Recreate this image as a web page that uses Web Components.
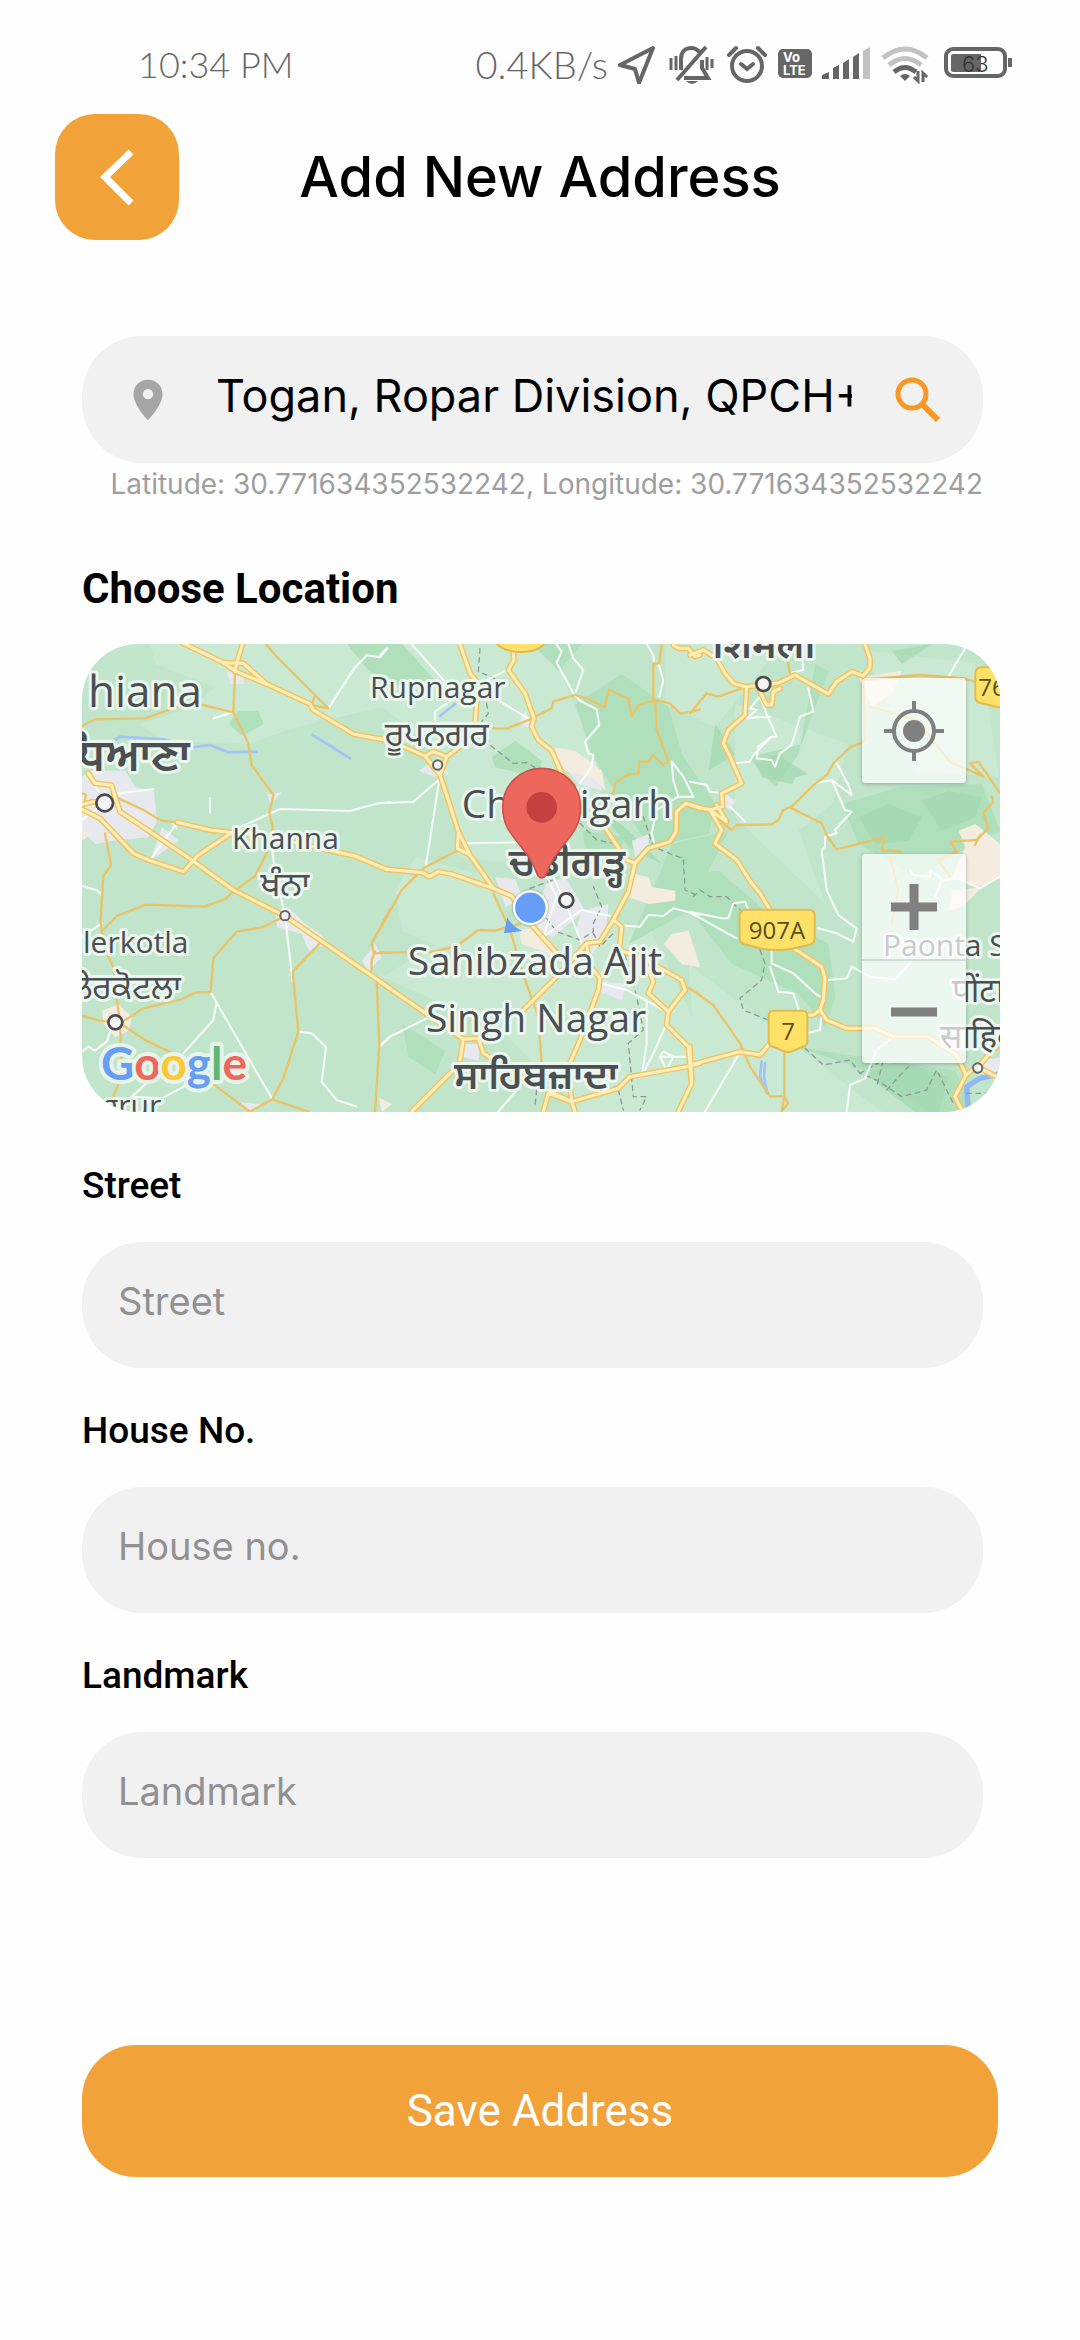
<!DOCTYPE html>
<html lang="en">
<head>
<meta charset="utf-8">
<meta name="viewport" content="width=device-width, initial-scale=1">
<title>Add New Address</title>
<style>
  body { margin: 0; background: #fefefe; color: #000; font-family: Inter, "Open Sans", sans-serif; }
</style>
</head>
<body>
<address-page></address-page>
<script>
const define = (name, html) => {
  const tpl = document.createElement('template');
  tpl.innerHTML = html;
  customElements.define(name, class extends HTMLElement {
    constructor() {
      super();
      this.attachShadow({ mode: 'open' }).append(tpl.content.cloneNode(true));
    }
  });
};

/* ---------- status bar ---------- */
define('status-bar', `
<style>
  :host { display: flex; align-items: center; justify-content: space-between; box-sizing: border-box;
    height: 114px; padding: 14px 68px 0 138px; color: #666; font: 300 36px/44px Lato, sans-serif; }
  .right { display: flex; align-items: center; gap: 10px; }
  .speed { font-size: 38px; }
  svg { display: block; height: 40px; fill: none; stroke: #666; }
  svg text { fill: #fff; stroke: none; font-family: Inter, sans-serif; }
</style>
<span>10:34 PM</span>
<div class="right">
  <span class="speed">0.4KB/s</span>
  <svg width="40" viewBox="0 0 40 40" stroke-width="4" stroke-linejoin="round"><path d="M35 4 2 21l15 4 4 14Z"/></svg>
  <svg width="48" viewBox="0 0 48 40" stroke-width="4"><path d="M9 36 38 3M13 26V15c0-7 4-11 10-11 4 0 7 2 9 5M34 16v8l6 10H16"/><path d="M3 14v12M8 12v14M39 13v13M44 15v9" stroke-width="3"/><path d="M18 37h12q-6 6-12 0Z" fill="#666" stroke="none"/></svg>
  <svg width="42" viewBox="0 0 42 40" stroke-width="4" stroke-linecap="round"><circle cx="21" cy="22" r="15"/><path d="m15 20 6 5 6-5M3 11l7-7M39 11l-7-7"/></svg>
  <svg width="34" viewBox="0 0 34 40"><rect y="5" width="34" height="29" rx="5" fill="#666" stroke="none"/><text x="5" y="18" font-size="13" font-weight="700">Vo</text><text x="5" y="31" font-size="13" font-weight="700">LTE</text></svg>
  <svg width="48" viewBox="0 0 48 40"><g fill="#666" stroke="none"><path d="M0 35v-4l7-3v7zM11 35V24l6-3v14zM21 35V19l6-4v20zM31 35V13l6-4v26z"/><path d="M41 35V7l7-4v32z" fill="#c2c2c2"/></g></svg>
  <svg width="50" viewBox="0 0 50 40" stroke-width="5"><path d="M3 14Q25-4 47 14M9 21q16-13 32 0" stroke="#c2c2c2"/><path d="M14 28q11-9 22 0"/><path d="M20 32q5-4 10 0l-5 5Z" fill="#666" stroke="none"/><path d="M38 27v10l-4-4M43 38V29l4 4" stroke-width="3"/></svg>
  <svg width="72" viewBox="0 0 72 40"><rect x="6" y="5" width="59" height="27" rx="7" stroke-width="4"/><path d="M11 12q0-2 2-2h28v18H13q-2 0-2-2Z" fill="#666" stroke="none"/><path d="M70 14v9" stroke-width="4"/><text x="22" y="28" font-size="22" font-weight="300" style="fill:#333">63</text></svg>
</div>`);

/* ---------- header ---------- */
define('page-header', `
<style>
  :host { display: grid; grid-template-columns: 124px 1fr 124px; align-items: center; padding: 0 55px; }
  button { height: 126px; border: 0; border-radius: 40px; background: #f1a239; padding: 0; display: grid; place-items: center; }
  h1 { margin: 0; text-align: center; font: 500 56px/80px Inter, sans-serif; }
</style>
<button aria-label="Back"><svg width="60" height="60" viewBox="0 0 60 60" fill="none" stroke="#fff" stroke-width="7"><path d="M44 5 18 30l26 26"/></svg></button>
<h1><slot></slot></h1>`);

/* ---------- search ---------- */
define('location-search', `
<style>
  :host { display: block; margin-right: 17px; }
  .box { display: flex; align-items: center; box-sizing: border-box; height: 127px; border-radius: 60px;
    background: #f1f1f1; padding: 0 36px 0 40px; }
  input { flex: 1; min-width: 0; margin: 0 37px 0 42px; padding: 0 0 8px; border: 0; outline: 0; background: none;
    color: #000; font: 400 45px/60px Inter, sans-serif; }
  button { border: 0; padding: 0; background: none; display: block; }
  svg { display: block; }
  p { margin: 0; text-align: right; color: #9e9e9e; font: 400 28px/42px Inter, sans-serif; white-space: nowrap; }
</style>
<div class="box">
  <svg width="52" height="52" viewBox="0 0 24 24" fill="#a6a6a6"><path d="M12 2.700C8.200 2.700 5.300 5.600 5.300 9.300 5.300 14.400 12 21.300 12 21.300s6.700-6.900 6.700-12c0-3.700-2.900-6.600-6.700-6.600Zm0 9a2.400 2.400 0 1 1 0-4.800 2.400 2.400 0 0 1 0 4.800Z"/></svg>
  <input aria-label="Search location" value="Togan, Ropar Division, QPCH+">
  <button aria-label="Search"><svg width="58" height="58" viewBox="0 0 58 58" fill="none" stroke="#f79824" stroke-width="5"><circle cx="23" cy="23" r="14"/><path d="m34 34 15 15" stroke-width="6"/></svg></button>
</div>
<p><slot></slot></p>`);

/* ---------- map ---------- */
/* Road geometry is stored per tile column; each tile has its own horizontal origin. */
const tiles = [
  { dx: -36,
    major: ['340,40 460,98 500,125 590,162 720,222 730,240 850,312 960,333','460,98 520,100 590,162','518,40 500,100 495,125','55,430 75,460 125,466 135,500 150,545 225,595 365,690 490,780 645,858 960,1075','30,535 90,565 190,670 240,692 340,725 385,675 480,612','30,525 70,515 104,519','322,577 420,600 600,622 855,678 950,718'],
    minor: ['36,288 75,268 225,265 330,228 400,225 490,247','495,130 490,247 535,340 545,405 610,495 598,550 608,590 600,650 555,738 490,785 465,808 402,830 228,824 140,858 95,905','588,42 620,80 735,195 775,235 725,225 735,195','105,610 123,705 100,738 92,870 95,905 110,970 130,1010 140,1100 150,1180 155,1340 125,1410','150,1180 220,1135 335,1108 375,1088 422,1086 430,985 500,905 578,892 645,858','36,1158 90,1172 150,1180 225,1230 340,1285 440,1370 540,1445','135,500 220,540 275,572 322,577','752,938 668,1025 685,1205 640,1345 607,1408 540,1445','607,1408 715,1445','960,838 905,940 912,970 960,968','905,1020 905,990 915,965','920,1050 928,1245 915,1445','36,490 48,495 40,530'],
    white: ['430,265 490,247','775,235 855,112 890,76 930,82 952,55','420,505 420,548','480,605 630,537 840,543 925,520 960,517','135,492 250,478','322,577 240,690','605,650 615,720 645,858 668,1055','36,768 80,780 95,795','36,920 95,880','422,1086 440,1118 607,1408','440,1118 430,1170 340,1270','185,1400 275,1405 370,1355','185,1400 240,1350','685,1205 725,1210 768,1252 755,1355 800,1410 860,1430','36,1265 55,1250 75,1262 110,1235 130,1180','928,1248 960,1220','55,430 104,519 36,570'],
    dash: [],
    river: ['120,342 150,320 280,328 370,352 420,345 475,367 560,365','728,315 840,385'] },
  { dx: 894,
    major: ['20,718 130,728 148,740 175,725 215,732 340,775 395,798 460,890 540,980','240,42 270,130 295,160 285,280 280,320 200,380 180,435','400,68 402,90 385,120 435,190 462,265 455,290 475,330 515,362 545,430 600,490 680,600 740,690 765,700','0,325 60,345 135,378 180,435 205,510 235,605 232,655 270,675 340,775','135,378 160,365 200,380','235,605 270,675','960,535 918,520 890,545 888,605 870,635 805,655 765,700 745,785 700,870 660,935 620,940 540,1030 430,1140','295,1225 250,1228 0,1055','250,1228 240,1290','215,1325 95,1445','295,1225 310,1270 440,1350 575,1415','620,940 628,1005 660,1045 655,1080 600,1230 565,1310 575,1415 585,1445','505,1390 490,1445','700,870 725,890 718,960 790,985 905,1050 915,1080 865,1145 860,1185 925,1250 935,1360 895,1445','790,985 820,1055 805,1090 865,1145','505,1390 575,1415 715,1375 750,1340 920,1310 960,1300','880,45 895,55 925,55 945,80 960,75'],
    minor: ['330,295 380,296 450,268 515,235 520,215 550,205 585,195 620,205 675,232 685,180 745,205 755,260 775,225 825,210 870,220 900,250 940,245 960,238','825,210 830,300 865,395 850,405 820,375 805,395 778,395 775,430 740,435 705,460 700,490 670,500','845,45 838,100 820,100 820,210','235,660 130,715 65,780 0,898','0,968 155,966 230,948 295,900 345,902 420,882','340,790 390,900 430,1035 475,1160 485,1300','905,1090 925,1075 960,1095'],
    white: ['0,75 20,55','95,42 195,155','300,160 385,118','360,215 450,268','165,280 165,245 230,200','528,42 545,65 530,98 580,190 600,212 650,238 658,285 615,335 625,370 640,375 635,410 600,460','565,42 580,85 610,120 588,185','800,42 820,75 822,100','835,100 850,150 838,200','0,520 100,515 178,448 138,705','255,640 410,637','0,1248 30,1220 150,1160','500,740 530,800 490,920 605,840 690,858','520,740 560,830 610,950','700,885 780,890 805,855 850,858 880,835 960,855','410,1380 355,1445','660,1060 740,1080 860,1145','800,1110 800,1240 785,1340','860,1180 825,1260 785,1340','840,1280 860,1320 880,1280 850,1265 840,1280 920,1280','875,395 880,450 895,500 940,500 910,440 875,395','895,500 830,540 815,610 825,650'],
    dash: ['300,55 295,125 345,145','310,165 325,250 305,275 330,345 400,400 440,398 470,415','450,775 520,750','500,865 530,905 600,930 640,905 640,880 665,830 640,770','600,580 650,630 700,640','790,560 820,650 880,675 910,685 915,780 960,800','735,975 770,1100 790,1200 745,1240 760,1400 800,1400 780,1440','640,910 660,950 700,910','470,1380 465,1430','715,1380 730,1440'],
    river: ['180,258 225,222'] },
  { dx: 1824,
    major: ['0,75 40,60 80,85 105,130 130,160 165,170 220,165 268,158 315,135 415,192 440,155 485,125 520,138 540,112 540,85 525,42','210,185 230,225 245,225 250,185 270,175','170,170 165,255 115,300 100,340 120,380 155,460 95,490 98,530 60,540','0,525 60,540 110,575 80,525','60,540 95,600 75,640 140,690 185,760 210,790 240,840','310,955 350,980 395,1010 405,1045 400,1110 390,1140 410,1170 470,1195 555,1195 610,1220 715,1220 800,1275 828,1335 795,1400 815,1440','390,1140 370,1155 330,1155','0,1305 150,1265 210,1275 240,1240','828,1335 860,1310 930,1345','0,1250 5,1350','865,1310 900,1270 930,1240'],
    minor: ['0,250 50,190 85,200 165,172','290,80 300,130','520,140 525,335 480,352 430,400 410,435 370,465 305,530 280,540 265,570 245,583 140,585 125,600 60,545','305,535 375,570 395,580 410,615 440,658 583,622 575,660 630,665','600,680 625,780 605,880','520,150 690,135 820,145 855,155','540,230 680,270 780,395 880,440 840,400 865,395 930,490','905,500 910,515 880,550 895,595 860,630 780,635 800,665 745,690 780,740','855,645 870,615','0,1075 70,1125 150,1240 180,1310 240,1400 283,1398 283,1270','283,1400 275,1445 295,1420 283,1400'],
    white: ['825,55 775,140','355,175 370,245 330,260 305,345 270,370 255,410 245,390 200,385 205,350 245,320 260,320 235,265 210,200 180,235 200,240 170,265 240,260','245,320 190,375 180,395 135,400','300,130 340,120 335,70','440,400 475,465 485,495 425,450 375,460','425,450 465,540 485,545 435,600 440,610 405,620 405,650 395,660 410,780 445,855 500,895 490,935 440,910 385,895','0,455 50,465 60,485 100,490','120,530 165,575','0,845 95,865 115,865 130,820 165,815 180,850','0,848 140,925','245,960 245,1000 310,1030 375,1090 390,1100','240,1010 265,1085 310,1090 330,1150','415,1050 470,1045 485,1010 540,1040 615,1048 660,1000','45,1445 145,1275','470,1445 480,1365 525,1345 560,1260 610,1220','660,720 670,735 720,740 720,720 760,750 800,745 870,775 930,740','755,750 735,800','395,1150 390,1200 350,1210'],
    dash: ['10,800 30,780 60,800 110,800 150,840','210,960 225,1000 215,1050 150,1105 160,1140 235,1170','345,1255 400,1305 480,1290 510,1330 560,1350 635,1400 710,1380 740,1320 790,1420','510,1330 580,1290 560,1370','590,1380 655,1310','830,1390 900,1390'],
    river: ['215,1295 210,1340 232,1390','225,1300 222,1340 232,1390'] }
];
const layer = (kind, attrs) => tiles.map(t =>
  `<g transform="translate(${t.dx} -42)" ${attrs}>${t[kind].map(p => `<polyline points="${p}"/>`).join('')}</g>`).join('');

const land = `
<g fill="#cae9d3">
  <path d="M205 0H1400L1500 240 1560 470 1300 660 1130 640 1100 420 1040 290 900 190 640 250 500 300 250 290 170 240 330 190 400 130 220 60Z"/>
  <path d="M1000 640 1230 700 1300 900 1100 920 960 860 940 740Z"/>
  <path d="M1150 850 1700 850 1800 1050 1950 1404H1500L1250 1150 900 1000Z"/>
  <path d="M1820 960 2200 1250 2400 1404H1850Z"/>
  <path d="M1960 180 2300 300 2250 480 2150 560 2230 780 1960 520Z"/>
  <path d="M1750 0 2100 0 1900 250 1750 180ZM2350 20 2700 60 2750 400 2500 380Z"/>
</g>
<g fill="#b0dfbc">
  <path d="M795 0 960 0 1060 110 960 130 860 80ZM470 200 530 200 545 240 480 275 440 240Z"/>
  <path d="M1230 340 1300 290 1380 350 1370 400 1240 370ZM1480 180 1620 90 1760 190 1800 330 1900 480 1880 570 1700 610 1620 480 1530 330Z"/>
  <path d="M1350 0 1500 0 1430 80ZM1770 600 1940 560 1820 800 1640 900 1720 720Z"/>
  <path d="M1500 560 1640 580 1590 640 1510 610Z"/>
  <path d="M2000 340 2160 300 2240 80 2200 60 2150 330 2080 430ZM2280 480 2450 430 2700 420 2754 560 2640 620 2500 700 2330 600Z"/>
  <path d="M1824 690 1910 680 2050 800 2240 900 2260 1060 2230 1150 2150 1050 1950 960 1824 800Z"/>
  <path d="M2150 1210 2340 1240 2500 1260 2620 1280 2680 1404H2540L2350 1280ZM960 1140 1090 1220 1060 1290 980 1240Z"/>
</g>
<g fill="#a3d8b2" opacity=".75">
  <path d="M2020 360 2080 330 2180 390 2140 400 2130 420 2040 400ZM2330 520 2420 480 2520 520 2480 590 2380 600ZM2350 1290 2450 1250 2600 1300 2570 1404H2500ZM1900 240 1960 330 1880 380ZM1540 480 1640 560 1740 660 1640 610Z"/>
  <path d="M2520 470 2600 440 2700 460 2680 520 2580 560ZM2430 20 2550 0 2460 60Z"/>
</g>
<g fill="#e7e9ee">
  <path d="M0 400 20 380 130 380 160 430 215 440 225 530 200 580 90 590 40 600 0 560ZM240 550 290 590 205 650ZM435 85 490 85 485 120 445 120ZM555 450 600 445 565 480ZM580 800 620 790 670 840 715 870 740 900 680 920 660 870 585 850ZM880 900 900 940 860 980 840 950ZM470 1375 540 1380 500 1404ZM260 530 290 530 285 560Z"/>
  <path d="M1240 700 1300 705 1320 760 1270 790ZM1390 720 1450 700 1510 800 1410 880 1360 850ZM1500 800 1580 780 1570 880 1530 930 1480 860ZM1550 1010 1630 1020 1620 1070 1550 1040ZM1150 1200 1190 1200 1190 1250 1140 1240ZM1450 370 1540 350 1560 440 1490 420ZM1650 590 1700 570 1700 600 1660 640ZM1920 440 1960 470 1945 500 1920 480ZM1010 380 1070 340 1100 390 1060 400ZM1330 200 1350 260 1310 235Z"/>
  <path d="M2690 1250 2754 1240 2754 1290 2690 1290Z"/>
</g>
<g fill="#f3ecdf">
  <path d="M60 1100 110 1080 150 1120 140 1160 100 1180 65 1140ZM0 560 30 570 0 590ZM890 1360 930 1380 900 1404Z"/>
  <path d="M1410 310 1480 320 1560 380 1570 440 1530 400 1450 380ZM1660 690 1700 700 1710 730 1780 740 1780 770 1700 780 1640 760ZM1770 870 1820 860 1855 970 1800 960 1745 900ZM1310 860 1360 850 1400 900 1450 960 1380 920 1320 900Z"/>
  <path d="M2630 560 2680 540 2754 600 2754 700 2690 730 2610 700 2650 610ZM2330 100 2460 80 2430 150 2370 190ZM2610 740 2700 730 2640 790 2600 800Z"/>
</g>`;

define('location-map', `
<style>
  :host { display: block; position: relative; height: 468px; border-radius: 56px; overflow: hidden; background: #c0e5ca; }
  .map { display: block; width: 100%; height: 100%; }
  .labels { font-family: "Open Sans", "Noto Sans", "Noto Sans Gurmukhi", "Noto Sans Devanagari", sans-serif; fill: #4b4f52;
    stroke: #eaf6ee; stroke-width: 6px; stroke-linejoin: round; paint-order: stroke; }
  .s { font-size: 30px; } .p { font-size: 33px; } .m { font-size: 39px; } .l { font-size: 44px; }
  .b { font-weight: 600; }
  .sign { font: 24px "Open Sans", sans-serif; fill: #55501f; text-anchor: middle; }
  .brand { font: 700 46px Lato, sans-serif; stroke: #e6f4ea; stroke-width: 8px; stroke-linejoin: round; paint-order: stroke; }
  .controls { position: absolute; top: 34px; right: 34px; width: 104px; display: flex; flex-direction: column; gap: 71px; }
  .stack { display: flex; flex-direction: column; }
  .controls > * { background: rgba(255,255,255,.7); border-radius: 4px; box-shadow: 0 1px 4px rgba(0,0,0,.25); }
  button { height: 105px; border: 0; padding: 0; display: grid; place-items: center; }
  .stack button { background: none; }
  .stack button + button { height: 104px; border-top: 2px solid rgba(160,190,170,.4); }
</style>
<svg class="map" viewBox="0 0 918 468" preserveAspectRatio="xMidYMid slice" role="img" aria-label="Map">
  <g transform="scale(.33333)" fill="none" stroke-linejoin="round" stroke-linecap="round">
    ${land}
    ${layer('river', 'stroke="#a3c3f5" stroke-width="8"')}
    <path d="M2760 1288 2694 1303 2654 1328 2659 1410" stroke="#8fb8f5" stroke-width="16"/>
    ${layer('dash', 'stroke="#8b9a92" stroke-width="4" stroke-dasharray="14 14"')}
    ${layer('white', 'stroke="#f8fcf9" stroke-width="6"')}
    ${layer('minor', 'stroke="#eac366" stroke-width="7"')}
    ${layer('major', 'stroke="#f0c560" stroke-width="18"')}
    ${layer('major', 'stroke="#ffeebb" stroke-width="9"')}
    <g fill="#f3f3f3" stroke="#4a4a4a">
      <g stroke-width="8"><circle cx="68" cy="477" r="25"/><circle cx="100" cy="1135" r="21"/><circle cx="1453" cy="769" r="21"/><circle cx="2044" cy="120" r="21"/></g>
      <g stroke-width="6" stroke="#666"><circle cx="609" cy="815" r="14"/><circle cx="1067" cy="363" r="14"/><circle cx="2687" cy="1272" r="14"/></g>
    </g>
    <g fill="#ffe168" stroke="#dfbb4c" stroke-width="6">
      <path d="M1992 797H2179Q2198 797 2198 815V883Q2198 898 2184 902L2130 914Q2086 922 2040 914L1986 900Q1973 896 1973 882V815Q1973 797 1992 797Z"/>
      <path d="M2076 1100H2160Q2176 1100 2176 1116V1192Q2176 1202 2168 1206L2128 1223Q2118 1227 2108 1223L2068 1206Q2060 1202 2060 1192V1116Q2060 1100 2076 1100Z"/>
      <path d="M2760 70H2698Q2680 70 2680 88V160Q2680 172 2692 176L2760 192Z"/>
      <path d="M1240 -6Q1260 22 1314 24T1392 -6Z"/>
    </g>
  </g>
  <g class="labels">
    <text class="l" x="6" y="63">hiana</text>
    <text class="l b" x="108" y="127" text-anchor="end">ਧਿਆਣਾ</text>
    <text class="s" x="288" y="54">Rupnagar</text>
    <text class="p" x="355" y="102" text-anchor="middle">ਰੂਪਨਗਰ</text>
    <text class="s" x="150" y="205">Khanna</text>
    <text class="p" x="203" y="252" text-anchor="middle">ਖੰਨਾ</text>
    <text class="s" x="1" y="309">lerkotla</text>
    <text class="p" x="99" y="355" text-anchor="end">ਲੇਰਕੋਟਲਾ</text>
    <text class="s" x="20" y="472">grur</text>
    <text class="m" x="485" y="174" text-anchor="middle">Chandigarh</text>
    <text class="m b" x="485" y="232" text-anchor="middle">ਚੰਡੀਗੜ੍ਹ</text>
    <text class="m" x="453" y="331" text-anchor="middle">Sahibzada Ajit</text>
    <text class="m" x="454" y="388" text-anchor="middle">Singh Nagar</text>
    <text class="m b" x="454" y="445" text-anchor="middle">ਸਾਹਿਬਜ਼ਾਦਾ</text>
    <text class="m b" x="682" y="14" text-anchor="middle">शिमला</text>
    <text class="s" x="801" y="312">Paonta S</text>
    <text class="p" x="870" y="358">पोंटा</text>
    <text class="p" x="858" y="404">साहिब</text>
  </g>
  <g class="sign"><text x="695" y="295">907A</text><text x="706" y="396">7</text><text x="910" y="52">76</text></g>
  <text class="brand" x="19" y="436"><tspan fill="#669df6">G</tspan><tspan fill="#ee675c">o</tspan><tspan fill="#fcc934">o</tspan><tspan fill="#669df6">g</tspan><tspan fill="#5bb974">l</tspan><tspan fill="#ee675c">e</tspan></text>
  <g transform="scale(.33333)">
    <path d="M1276 820 1266 868 1321 861Q1290 848 1276 820Z" fill="#669df6"/>
    <circle cx="1345" cy="791" r="56" fill="#0002"/>
    <circle cx="1345" cy="791" r="49" fill="#669df6" stroke="#fff" stroke-width="7"/>
    <path d="M1379 373C1313 373 1262 425 1262 490c0 48 20 74 46 106 30 38 46 60 58 96q5 10 13 10t13-10c12-36 28-58 58-96 26-32 46-58 46-106 0-65-51-117-117-117Z" fill="#ee675c" stroke="#cc524d" stroke-width="5"/>
    <circle cx="1379" cy="490" r="46" fill="#c4413f"/>
  </g>
</svg>
<div class="controls">
  <button aria-label="My location"><svg width="60" height="60" viewBox="0 0 60 60" fill="none" stroke="#808080" stroke-width="4"><circle cx="30" cy="30" r="20"/><path d="M30 0v10M30 50v10M0 30h10M50 30h10"/><circle cx="30" cy="30" r="11" fill="#808080" stroke="none"/></svg></button>
  <div class="stack">
    <button aria-label="Zoom in"><svg width="46" height="46" viewBox="0 0 46 46" stroke="#808080" stroke-width="9"><path d="M23 0v46M0 23h46"/></svg></button>
    <button aria-label="Zoom out"><svg width="46" height="46" viewBox="0 0 46 46" stroke="#808080" stroke-width="9"><path d="M0 23h46"/></svg></button>
  </div>
</div>`);

/* ---------- labelled text field ---------- */
customElements.define('text-field', class extends HTMLElement {
  constructor() {
    super();
    this.attachShadow({ mode: 'open' }).innerHTML = `
<style>
  :host { display: flex; flex-direction: column; gap: 35px; margin-right: 17px; }
  label { font: 500 37px/42px Roboto, sans-serif; }
  input { box-sizing: border-box; width: 100%; height: 126px; border: 0; outline: 0; border-radius: 60px;
    background: #f1f1f1; padding: 0 36px 8px; color: #000; font: 400 38px/52px Inter, sans-serif; }
  input::placeholder { color: #919191; opacity: 1; }
</style>
<label for="field"></label><input id="field">`;
  }
  connectedCallback() {
    this.shadowRoot.querySelector('label').textContent = this.getAttribute('label');
    this.shadowRoot.querySelector('input').placeholder = this.getAttribute('hint');
  }
});

define('primary-button', `
<style>
  :host { display: block; margin-right: 2px; }
  button { width: 100%; height: 132px; border: 0; border-radius: 54px; background: #f1a239; color: #fff; font: 400 44px/56px Roboto, sans-serif; }
</style>
<button><slot></slot></button>`);

/* ---------- page ---------- */
define('address-page', `
<style>
  :host { display: block; }
  main { padding: 96px 80px 160px 82px; }
  h2 { margin: 60px 0 31px; font: 700 42px/48px Roboto, sans-serif; }
  form { display: flex; flex-direction: column; gap: 42px; margin-top: 53px; }
  primary-button { margin-top: 145px; }
</style>
<status-bar></status-bar>
<page-header>Add New Address</page-header>
<main>
  <location-search>Latitude: 30.771634352532242, Longitude: 30.771634352532242</location-search>
  <h2>Choose Location</h2>
  <location-map></location-map>
  <form>
    <text-field label="Street" hint="Street"></text-field>
    <text-field label="House No." hint="House no."></text-field>
    <text-field label="Landmark" hint="Landmark"></text-field>
    <primary-button>Save Address</primary-button>
  </form>
</main>`);
</script>
</body>
</html>
